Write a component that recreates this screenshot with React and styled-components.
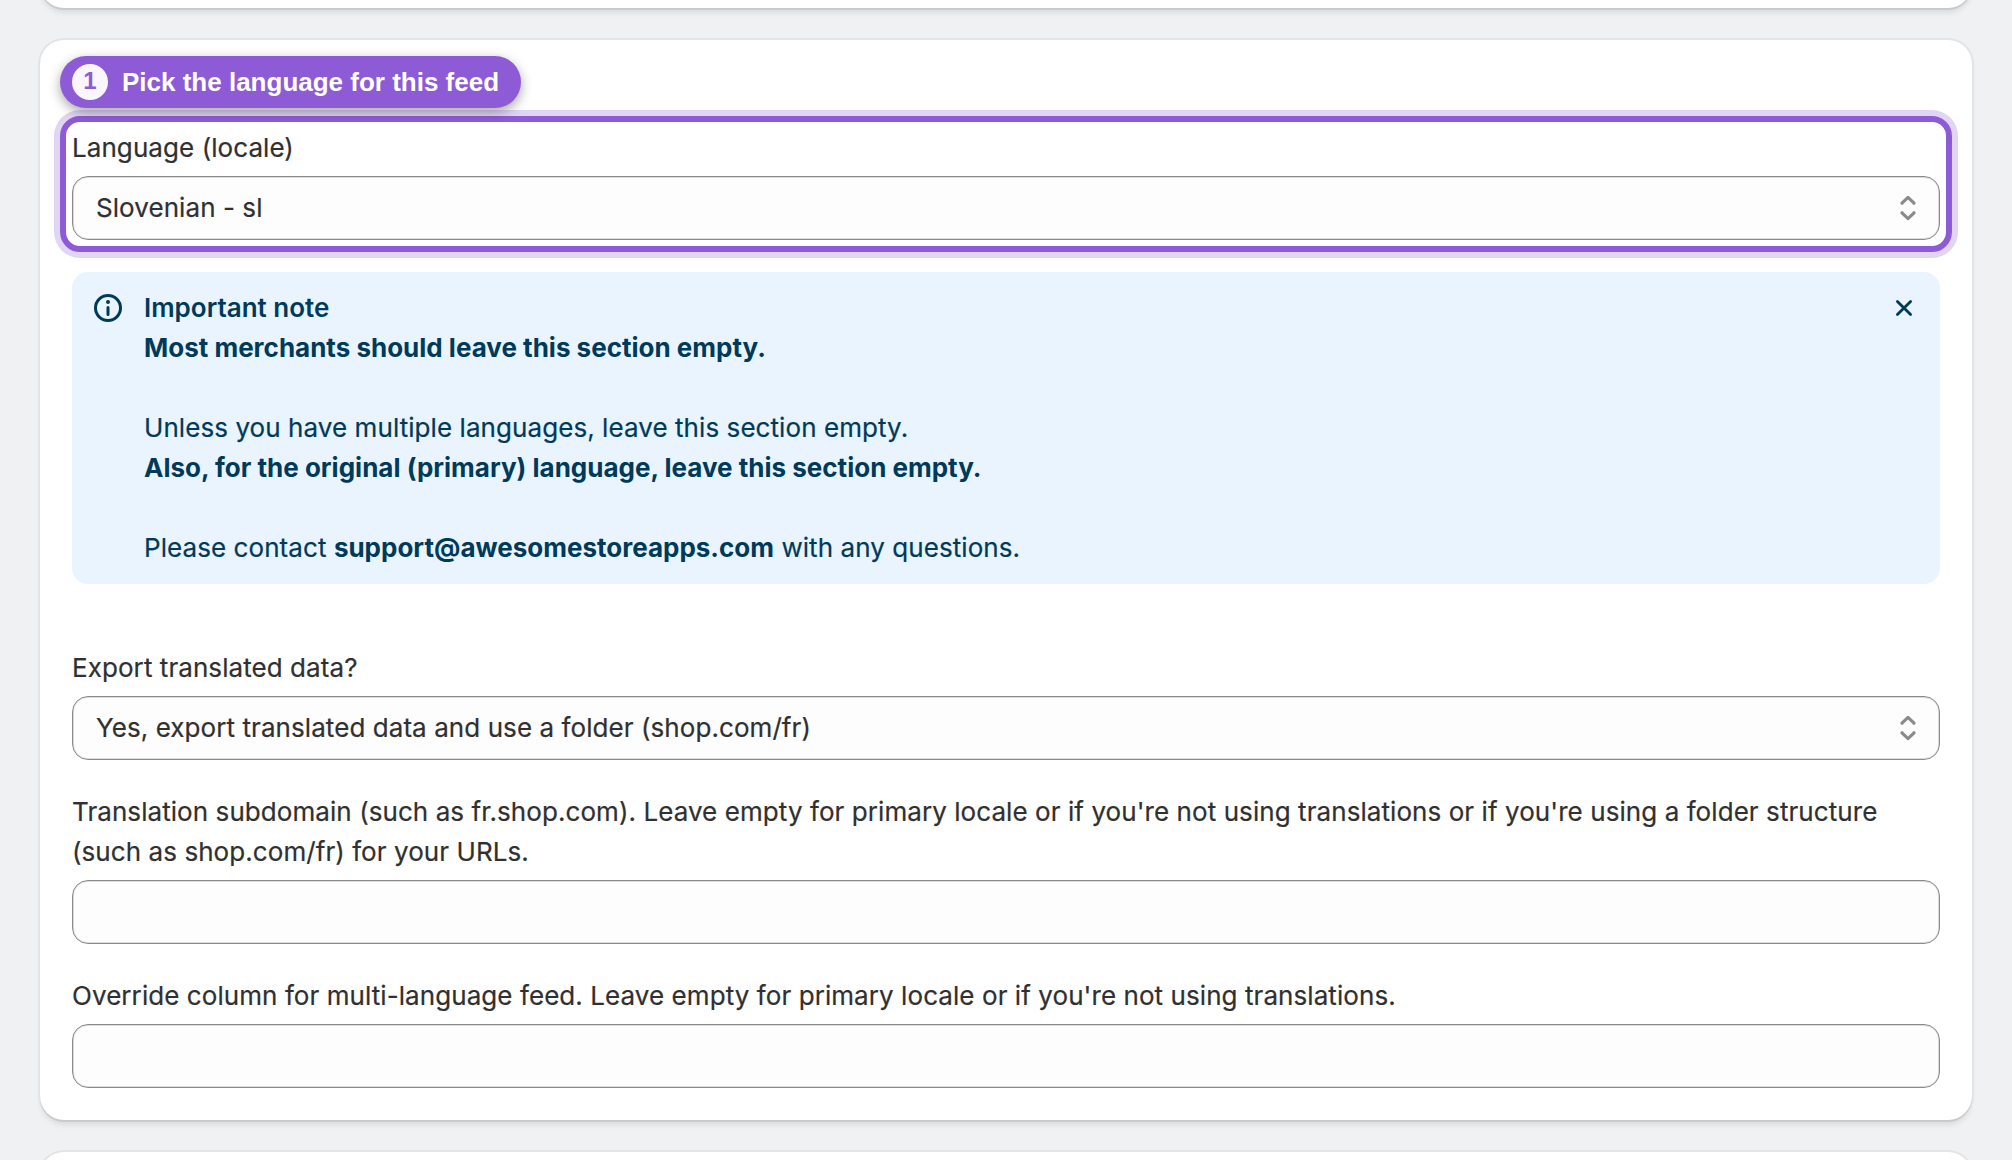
import React, { useState } from 'react';
import styled, { createGlobalStyle } from 'styled-components';

const GlobalStyle = createGlobalStyle`
  * {
    box-sizing: border-box;
  }

  body {
    margin: 0;
    height: 1160px;
    overflow: hidden;
    background: #f0f1f3;
    color: #303030;
    font-family: Inter, 'Liberation Sans', sans-serif;
    font-size: 26px;
    font-weight: 400;
    letter-spacing: 0.07px;
    line-height: 40px;
    -webkit-text-stroke: 0.2px currentColor;
  }
`;

const Page = styled.main`
  display: flex;
  flex-direction: column;
  gap: 32px;
  height: 1160px;
  padding: 0 40px;
  overflow: hidden;
`;

const Card = styled.section`
  flex: none;
  padding: 16px 32px 32px;
  background: #fff;
  border-radius: 24px;
  box-shadow: 0 2px 0 0 #c9cacb, 0 0 0 2px #e3e4e5, 0 6px 6px -2px rgba(26, 26, 26, 0.12);
`;

// neighbour cards, only their edges are in view
const PreviousCard = styled(Card)`
  height: 60px;
  margin-top: -52px;
`;

const NextCard = styled(Card)`
  height: 80px;
`;

const StepPill = styled.div`
  position: relative;
  z-index: 1;
  display: flex;
  align-items: center;
  gap: 14px;
  width: 461px;
  height: 52px;
  margin: 0 0 8px -12px;
  padding: 0 12px;
  border-radius: 26px;
  background: #8e5bd6;
  box-shadow: 0 4px 12px rgba(0, 0, 0, 0.35);
  color: #fff;
  font-family: 'Liberation Sans', Arial, sans-serif;
  font-size: 26px;
  font-weight: 700;
  letter-spacing: 0;
  white-space: nowrap;
  -webkit-text-stroke: 0;
`;

const StepNumber = styled.span`
  flex: none;
  width: 36px;
  height: 36px;
  border-radius: 50%;
  background: #f9f6fd;
  color: #8e5bd6;
  font-size: 24px;
  line-height: 34px;
  text-align: center;
`;

const Field = styled.div`
  display: flex;
  flex-direction: column;
  gap: 8px;
  margin-bottom: ${props => (props.$last ? '0' : '32px')};
`;

const Highlight = styled.div`
  margin: 0 -12px 20px;
  padding: 6px;
  border: 6px solid #8e5bd6;
  border-radius: 20px;
  box-shadow: 0 0 0 6px #e1d5f4;

  ${Field} {
    margin: 0;
  }
`;

const Label = styled.label`
  display: block;
`;

const SelectBox = styled.button`
  display: flex;
  align-items: center;
  justify-content: space-between;
  height: 64px;
  padding: 0 11px 0 23px;
  border: 1px solid #8a8a8a;
  border-radius: 16px;
  background: #fdfdfd;
  box-shadow: inset 0 0 0 1px #dcdcdc;
  color: inherit;
  font: inherit;
  letter-spacing: inherit;
  text-align: left;
`;

const TextInput = styled.input`
  width: 100%;
  height: 64px;
  padding: 0 23px;
  border: 1px solid #8a8a8a;
  border-radius: 16px;
  background: #fdfdfd;
  box-shadow: inset 0 0 0 1px #dcdcdc;
  color: inherit;
  font: inherit;
  letter-spacing: inherit;
`;

const Banner = styled.div`
  display: flex;
  gap: 16px;
  margin-bottom: 64px;
  padding: 16px;
  border-radius: 16px;
  background: #eaf4ff;
  color: #003a5a;
`;

const BannerText = styled.div`
  flex: 1;
`;

const BannerTitle = styled.div`
  font-weight: 600;
  letter-spacing: 0;
  -webkit-text-stroke: 0;
`;

const Bold = styled.strong`
  font-weight: 700;
  letter-spacing: 0;
  -webkit-text-stroke: 0;
`;

const CloseButton = styled.button`
  display: flex;
  width: 40px;
  height: 40px;
  padding: 0;
  border: none;
  background: none;
  color: inherit;
`;

const Icon = styled.svg`
  flex: none;
  width: 40px;
  height: 40px;
`;

const InfoIcon = () => (
  <Icon viewBox="0 0 20 20" fill="currentColor">
    <path d="M10 14a.75.75 0 0 1-.75-.75v-3.5a.75.75 0 0 1 1.5 0v3.5a.75.75 0 0 1-.75.75Z" />
    <path d="M9 7a1 1 0 1 1 2 0 1 1 0 0 1-2 0Z" />
    <path
      fillRule="evenodd"
      d="M17 10a7 7 0 1 1-14 0 7 7 0 0 1 14 0Zm-1.5 0a5.5 5.5 0 1 1-11 0 5.5 5.5 0 0 1 11 0Z"
    />
  </Icon>
);

const CloseIcon = () => (
  <Icon viewBox="0 0 20 20" fill="none" stroke="currentColor" strokeWidth="1.4" strokeLinecap="round">
    <path d="M6.7 6.7l6.6 6.6M13.3 6.7l-6.6 6.6" />
  </Icon>
);

const SelectIcon = () => (
  <Icon
    viewBox="0 0 20 20"
    fill="none"
    stroke="#8a8a8a"
    strokeWidth="1.6"
    strokeLinecap="round"
    strokeLinejoin="round"
  >
    <path d="M7 7.6l3-2.9 3 2.9" />
    <path d="M7 12.4l3 2.9 3-2.9" />
  </Icon>
);

const Select = ({ id, value }) => (
  <SelectBox id={id} type="button">
    {value}
    <SelectIcon />
  </SelectBox>
);

export default function App() {
  const [subdomain, setSubdomain] = useState('');
  const [override, setOverride] = useState('');

  return (
    <Page>
      <GlobalStyle />
      <PreviousCard />
      <Card>
        <StepPill>
          <StepNumber>1</StepNumber>
          Pick the language for this feed
        </StepPill>
        {/* the marked field of this step; its frame reaches 12px past the other fields */}
        <Highlight>
          <Field>
            <Label htmlFor="locale">Language (locale)</Label>
            <Select id="locale" value="Slovenian - sl" />
          </Field>
        </Highlight>
        <Banner>
          <InfoIcon />
          <BannerText>
            <BannerTitle>Important note</BannerTitle>
            <Bold>Most merchants should leave this section empty.</Bold>
            <br />
            <br />
            Unless you have multiple languages, leave this section empty.
            <br />
            <Bold>Also, for the original (primary) language, leave this section empty.</Bold>
            <br />
            <br />
            Please contact <Bold>support@awesomestoreapps.com</Bold> with any questions.
          </BannerText>
          <CloseButton type="button" aria-label="Dismiss">
            <CloseIcon />
          </CloseButton>
        </Banner>
        <Field>
          <Label htmlFor="export">Export translated data?</Label>
          <Select id="export" value="Yes, export translated data and use a folder (shop.com/fr)" />
        </Field>
        <Field>
          <Label htmlFor="subdomain">
            Translation subdomain (such as fr.shop.com). Leave empty for primary locale or if you're not using
            translations or if you're using a folder structure (such as shop.com/fr) for your URLs.
          </Label>
          <TextInput id="subdomain" value={subdomain} onChange={e => setSubdomain(e.target.value)} />
        </Field>
        <Field $last>
          <Label htmlFor="override">
            Override column for multi-language feed. Leave empty for primary locale or if you're not using
            translations.
          </Label>
          <TextInput id="override" value={override} onChange={e => setOverride(e.target.value)} />
        </Field>
      </Card>
      <NextCard />
    </Page>
  );
}
